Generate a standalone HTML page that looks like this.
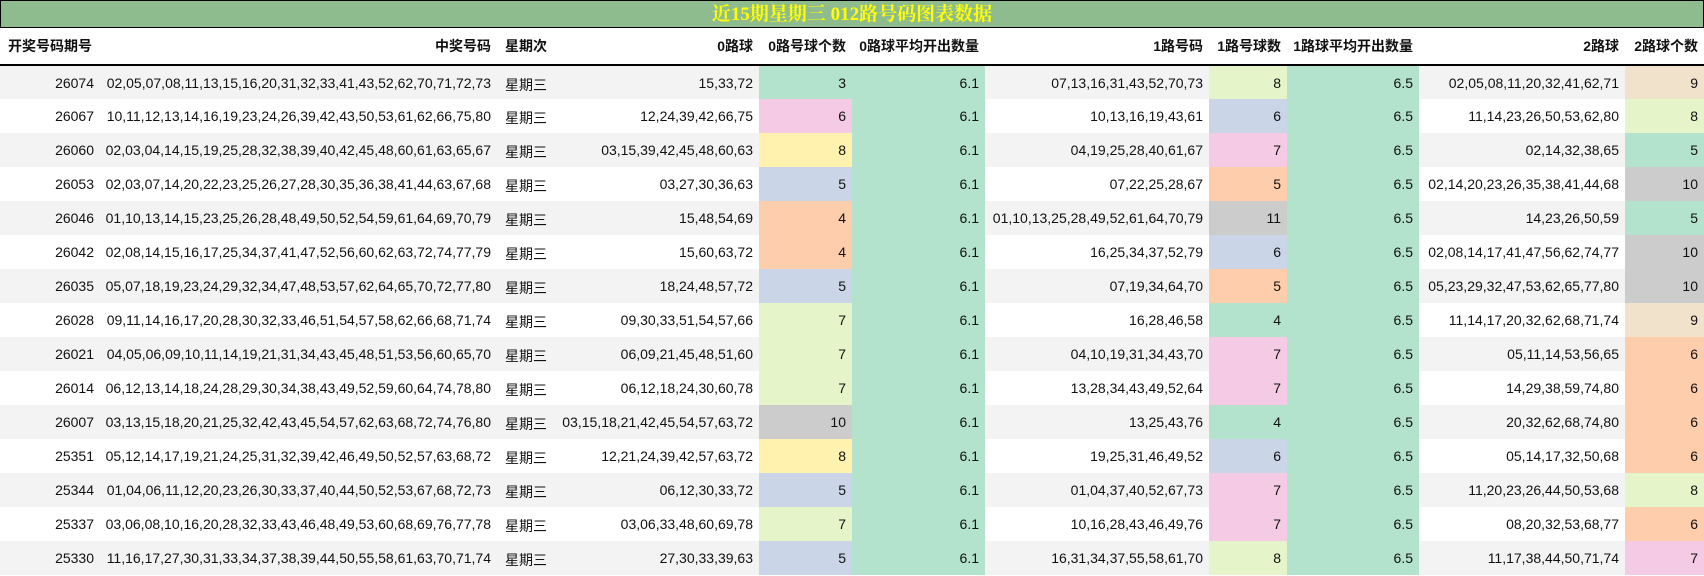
<!DOCTYPE html>
<html><head><meta charset="utf-8"><style>
body{margin:0;width:1704px;height:576px;overflow:hidden;background:#fff;font-family:"Liberation Sans","Noto Sans CJK SC",sans-serif;}
.title{height:26px;background:#8fbc8f;border:1px solid #000;color:#ffff00;font-weight:bold;font-size:19px;text-align:center;line-height:28px;font-family:"Liberation Serif","Noto Serif CJK SC",serif;}
table{border-collapse:collapse;table-layout:fixed;width:1704px;font-size:14px;color:#111;}
td,th{padding:0 6px 0 4px;text-align:right;white-space:nowrap;overflow:hidden;height:34px;box-sizing:border-box;}
th{height:37px;font-weight:bold;border-bottom:2px solid #000;}
td.l{text-align:left;padding-left:8px;padding-top:4px;}
th.l{text-align:left;padding-left:8px}
tr.g td{background:#f3f3f3}
tr td.a{background:#b3e2cd}
tr td.G{background:#b3e2cd}tr td.Y{background:#e6f5c9}tr td.P{background:#f4cae4}tr td.B{background:#cbd5e8}tr td.O{background:#fdcdac}tr td.W{background:#fff2ae}tr td.C{background:#cccccc}tr td.T{background:#f1e2cc}
</style></head><body>
<div class="title">近15期星期三 012路号码图表数据</div>
<table>
<colgroup><col style="width:100px"><col style="width:397px"><col style="width:57px"><col style="width:205px"><col style="width:93px"><col style="width:133px"><col style="width:224px"><col style="width:78px"><col style="width:132px"><col style="width:206px"><col style="width:79px"></colgroup>
<tr><th class="l">开奖号码期号</th><th>中奖号码</th><th class="l">星期次</th><th>0路球</th><th>0路号球个数</th><th>0路球平均开出数量</th><th>1路号码</th><th>1路号球数</th><th>1路球平均开出数量</th><th>2路球</th><th>2路球个数</th></tr>
<tr class="g"><td>26074</td><td>02,05,07,08,11,13,15,16,20,31,32,33,41,43,52,62,70,71,72,73</td><td class="l">星期三</td><td>15,33,72</td><td class="G">3</td><td class="a">6.1</td><td>07,13,16,31,43,52,70,73</td><td class="Y">8</td><td class="a">6.5</td><td>02,05,08,11,20,32,41,62,71</td><td class="T">9</td></tr>
<tr><td>26067</td><td>10,11,12,13,14,16,19,23,24,26,39,42,43,50,53,61,62,66,75,80</td><td class="l">星期三</td><td>12,24,39,42,66,75</td><td class="P">6</td><td class="a">6.1</td><td>10,13,16,19,43,61</td><td class="B">6</td><td class="a">6.5</td><td>11,14,23,26,50,53,62,80</td><td class="Y">8</td></tr>
<tr class="g"><td>26060</td><td>02,03,04,14,15,19,25,28,32,38,39,40,42,45,48,60,61,63,65,67</td><td class="l">星期三</td><td>03,15,39,42,45,48,60,63</td><td class="W">8</td><td class="a">6.1</td><td>04,19,25,28,40,61,67</td><td class="P">7</td><td class="a">6.5</td><td>02,14,32,38,65</td><td class="G">5</td></tr>
<tr><td>26053</td><td>02,03,07,14,20,22,23,25,26,27,28,30,35,36,38,41,44,63,67,68</td><td class="l">星期三</td><td>03,27,30,36,63</td><td class="B">5</td><td class="a">6.1</td><td>07,22,25,28,67</td><td class="O">5</td><td class="a">6.5</td><td>02,14,20,23,26,35,38,41,44,68</td><td class="C">10</td></tr>
<tr class="g"><td>26046</td><td>01,10,13,14,15,23,25,26,28,48,49,50,52,54,59,61,64,69,70,79</td><td class="l">星期三</td><td>15,48,54,69</td><td class="O">4</td><td class="a">6.1</td><td>01,10,13,25,28,49,52,61,64,70,79</td><td class="C">11</td><td class="a">6.5</td><td>14,23,26,50,59</td><td class="G">5</td></tr>
<tr><td>26042</td><td>02,08,14,15,16,17,25,34,37,41,47,52,56,60,62,63,72,74,77,79</td><td class="l">星期三</td><td>15,60,63,72</td><td class="O">4</td><td class="a">6.1</td><td>16,25,34,37,52,79</td><td class="B">6</td><td class="a">6.5</td><td>02,08,14,17,41,47,56,62,74,77</td><td class="C">10</td></tr>
<tr class="g"><td>26035</td><td>05,07,18,19,23,24,29,32,34,47,48,53,57,62,64,65,70,72,77,80</td><td class="l">星期三</td><td>18,24,48,57,72</td><td class="B">5</td><td class="a">6.1</td><td>07,19,34,64,70</td><td class="O">5</td><td class="a">6.5</td><td>05,23,29,32,47,53,62,65,77,80</td><td class="C">10</td></tr>
<tr><td>26028</td><td>09,11,14,16,17,20,28,30,32,33,46,51,54,57,58,62,66,68,71,74</td><td class="l">星期三</td><td>09,30,33,51,54,57,66</td><td class="Y">7</td><td class="a">6.1</td><td>16,28,46,58</td><td class="G">4</td><td class="a">6.5</td><td>11,14,17,20,32,62,68,71,74</td><td class="T">9</td></tr>
<tr class="g"><td>26021</td><td>04,05,06,09,10,11,14,19,21,31,34,43,45,48,51,53,56,60,65,70</td><td class="l">星期三</td><td>06,09,21,45,48,51,60</td><td class="Y">7</td><td class="a">6.1</td><td>04,10,19,31,34,43,70</td><td class="P">7</td><td class="a">6.5</td><td>05,11,14,53,56,65</td><td class="O">6</td></tr>
<tr><td>26014</td><td>06,12,13,14,18,24,28,29,30,34,38,43,49,52,59,60,64,74,78,80</td><td class="l">星期三</td><td>06,12,18,24,30,60,78</td><td class="Y">7</td><td class="a">6.1</td><td>13,28,34,43,49,52,64</td><td class="P">7</td><td class="a">6.5</td><td>14,29,38,59,74,80</td><td class="O">6</td></tr>
<tr class="g"><td>26007</td><td>03,13,15,18,20,21,25,32,42,43,45,54,57,62,63,68,72,74,76,80</td><td class="l">星期三</td><td>03,15,18,21,42,45,54,57,63,72</td><td class="C">10</td><td class="a">6.1</td><td>13,25,43,76</td><td class="G">4</td><td class="a">6.5</td><td>20,32,62,68,74,80</td><td class="O">6</td></tr>
<tr><td>25351</td><td>05,12,14,17,19,21,24,25,31,32,39,42,46,49,50,52,57,63,68,72</td><td class="l">星期三</td><td>12,21,24,39,42,57,63,72</td><td class="W">8</td><td class="a">6.1</td><td>19,25,31,46,49,52</td><td class="B">6</td><td class="a">6.5</td><td>05,14,17,32,50,68</td><td class="O">6</td></tr>
<tr class="g"><td>25344</td><td>01,04,06,11,12,20,23,26,30,33,37,40,44,50,52,53,67,68,72,73</td><td class="l">星期三</td><td>06,12,30,33,72</td><td class="B">5</td><td class="a">6.1</td><td>01,04,37,40,52,67,73</td><td class="P">7</td><td class="a">6.5</td><td>11,20,23,26,44,50,53,68</td><td class="Y">8</td></tr>
<tr><td>25337</td><td>03,06,08,10,16,20,28,32,33,43,46,48,49,53,60,68,69,76,77,78</td><td class="l">星期三</td><td>03,06,33,48,60,69,78</td><td class="Y">7</td><td class="a">6.1</td><td>10,16,28,43,46,49,76</td><td class="P">7</td><td class="a">6.5</td><td>08,20,32,53,68,77</td><td class="O">6</td></tr>
<tr class="g"><td>25330</td><td>11,16,17,27,30,31,33,34,37,38,39,44,50,55,58,61,63,70,71,74</td><td class="l">星期三</td><td>27,30,33,39,63</td><td class="B">5</td><td class="a">6.1</td><td>16,31,34,37,55,58,61,70</td><td class="Y">8</td><td class="a">6.5</td><td>11,17,38,44,50,71,74</td><td class="P">7</td></tr>
</table>
</body></html>
